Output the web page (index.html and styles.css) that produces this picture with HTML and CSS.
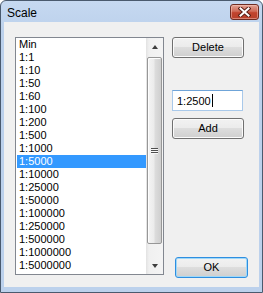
FILE: index.html
```html
<!DOCTYPE html>
<html>
<head>
<meta charset="utf-8">
<link rel="stylesheet" href="styles.css">
</head>
<body>
<div class="window">
  <div class="titlebar">
    <span class="title">Scale</span>
    <div class="close">
      <svg width="13" height="10" viewBox="0 0 13 10">
        <path d="M2.5 1.5 L10.5 8.5 M10.5 1.5 L2.5 8.5" stroke="#5a1f16" stroke-width="4" stroke-linecap="square"/>
        <path d="M2.5 1.5 L10.5 8.5 M10.5 1.5 L2.5 8.5" stroke="#ffffff" stroke-width="2" stroke-linecap="square"/>
      </svg>
    </div>
  </div>
  <div class="client">
    <div class="listbox">
      <ul class="items">
        <li>Min</li>
        <li>1:1</li>
        <li>1:10</li>
        <li>1:50</li>
        <li>1:60</li>
        <li>1:100</li>
        <li>1:200</li>
        <li>1:500</li>
        <li>1:1000</li>
        <li class="selected">1:5000</li>
        <li>1:10000</li>
        <li>1:25000</li>
        <li>1:50000</li>
        <li>1:100000</li>
        <li>1:250000</li>
        <li>1:500000</li>
        <li>1:1000000</li>
        <li>1:5000000</li>
      </ul>
      <div class="scrollbar">
        <div class="arrow"><span class="tri-up"></span></div>
        <div class="track"><div class="thumb"><span class="grip"></span></div></div>
        <div class="arrow"><span class="tri-down"></span></div>
      </div>
    </div>
    <div class="side">
      <div class="btn">Delete</div>
      <div class="input"><span>1:2500</span><span class="caret"></span></div>
      <div class="btn add">Add</div>
      <div class="btn default">OK</div>
    </div>
  </div>
</div>
</body>
</html>
```

FILE: styles.css
```css
html, body {
  margin: 0;
  padding: 0;
  background: #ffffff;
}
body {
  font-family: "Liberation Sans", Arial, sans-serif;
  font-size: 11px;
  color: #000;
}
.window {
  width: 263px;
  height: 293px;
  box-sizing: border-box;
  border: 1px solid #4a5a6e;
  border-radius: 6px 6px 0 0;
  background: linear-gradient(#c6d9f1, #bcd1ec 30px, #bcd1ec);
  padding: 0 3px 5px 3px;
  display: flex;
  flex-direction: column;
}
.titlebar {
  height: 21px;
  display: flex;
  align-items: flex-start;
  justify-content: space-between;
}
.title {
  font-size: 12px;
  padding: 5px 0 0 3px;
  line-height: 14px;
  color: #000;
}
.close {
  margin-top: 3px;
  width: 29px;
  height: 16px;
  box-sizing: border-box;
  border: 1px solid #6e2c22;
  border-radius: 3px;
  background: linear-gradient(#e3a394, #cf6a57 45%, #c0432d 55%, #b8402b);
  box-shadow: inset 0 0 0 1px rgba(255, 210, 200, 0.45);
  display: flex;
  align-items: center;
  justify-content: center;
}
.close svg {
  display: block;
}
.client {
  flex: 1;
  background: #f0f0f0;
  display: flex;
  padding: 15px 0 9px 11px;
}
.listbox {
  width: 149px;
  height: 238px;
  box-sizing: border-box;
  border: 1px solid #828790;
  background: #ffffff;
  display: flex;
}
.items {
  list-style: none;
  margin: 0;
  padding: 0 0 0 1px;
  flex: 1;
}
.items li {
  height: 13px;
  line-height: 13px;
  padding-left: 2px;
  white-space: nowrap;
}
.items li.selected {
  background: #3399ff;
  color: #ffffff;
}
.scrollbar {
  width: 17px;
  display: flex;
  flex-direction: column;
  background: linear-gradient(to right, #e2e2e2, #f0f0f0 3px, #f4f4f4);
}
.arrow {
  height: 17px;
  display: flex;
  align-items: center;
  justify-content: center;
}
.tri-up {
  width: 0;
  height: 0;
  border-left: 3px solid transparent;
  border-right: 3px solid transparent;
  border-bottom: 4px solid #3e3e3e;
}
.tri-down {
  width: 0;
  height: 0;
  border-left: 3px solid transparent;
  border-right: 3px solid transparent;
  border-top: 4px solid #3e3e3e;
}
.track {
  flex: 1;
  padding: 2px 0 13px 0;
  display: flex;
}
.thumb {
  flex: 1;
  margin: 0 1px;
  box-sizing: border-box;
  border: 1px solid #979797;
  border-radius: 2px;
  background: linear-gradient(to right, #f4f4f4, #ececec 45%, #dcdcdc 55%, #cfcfcf);
  box-shadow: inset 1px 1px 0 #fdfdfd;
  display: flex;
  align-items: center;
  justify-content: center;
}
.grip {
  width: 7px;
  height: 6px;
  background: repeating-linear-gradient(#4f4f4f 0 1px, #f8f8f8 1px 2px);
}
.side {
  margin-left: 8px;
  display: flex;
  flex-direction: column;
  width: 76px;
}
.btn {
  width: 72px;
  height: 21px;
  box-sizing: border-box;
  border: 1px solid #707070;
  border-radius: 3px;
  background: linear-gradient(#f2f2f2, #ebebeb 50%, #dddddd 50%, #cfcfcf);
  box-shadow: inset 0 0 0 1px #fbfbfb;
  text-align: center;
  line-height: 19px;
  font-size: 11px;
}
.input {
  margin-top: 32px;
  width: 71px;
  height: 21px;
  box-sizing: border-box;
  border: 1px solid #a9c9ea;
  border-top-color: #6fa4d8;
  background: #ffffff;
  display: flex;
  align-items: center;
  padding-left: 4px;
}
.caret {
  width: 1px;
  height: 13px;
  background: #000;
  margin-left: 1px;
}
.btn.add {
  margin-top: 7px;
}
.btn.default {
  margin-top: auto;
  margin-left: 3px;
  width: 73px;
  border-color: #2e8ee0;
  box-shadow: inset 0 0 0 1px #9fd8f8;
}
```
